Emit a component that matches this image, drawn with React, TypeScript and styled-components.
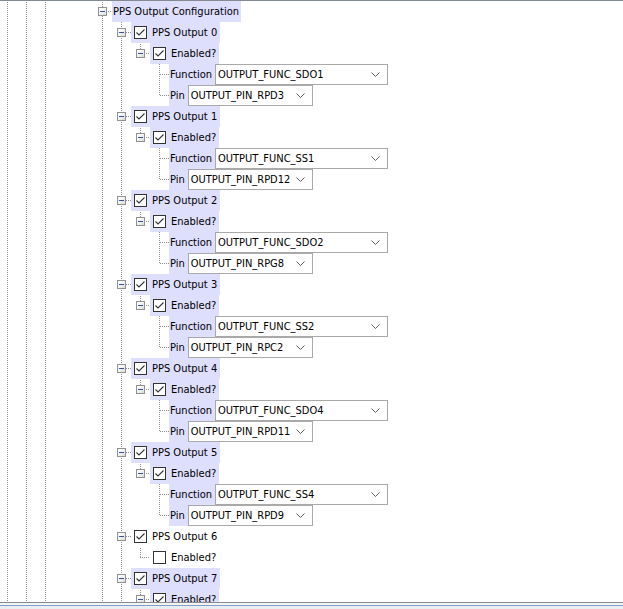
import React from 'react';
import styled, { createGlobalStyle } from 'styled-components';

const GlobalStyle = createGlobalStyle`
  html, body { margin: 0; padding: 0; background: #fff; }
  body {
    width: 623px; height: 609px; overflow: hidden;
    font-family: "DejaVu Sans Condensed", "Liberation Sans", sans-serif;
    font-size: 11px; color: #000;
  }
`;

const Window = styled.div`
  width: 623px; height: 609px;
  display: flex; flex-direction: column;
  background: #fff;
`;

const TreeArea = styled.div`
  flex: 1; min-height: 0; overflow: hidden;
  border-top: 1px solid #838a92;
`;

const Tree = styled.div`
  margin-left: -2px;
  display: flex; flex-direction: column;
`;

const Row = styled.div`
  display: flex; align-items: center;
  height: 21px; flex-shrink: 0;
`;

type GuideKind = 'none' | 'pass' | 'tee' | 'ell';

const LINE = '#8f8f8f';

const Guide = styled.div<{ $kind: GuideKind }>`
  position: relative;
  width: 19px; height: 21px; flex-shrink: 0;
  display: flex; align-items: center; justify-content: center;
  &::before {
    content: '';
    display: ${(p) => (p.$kind === 'none' ? 'none' : 'block')};
    position: absolute; left: 9px; top: 0; width: 1px;
    height: ${(p) => (p.$kind === 'ell' ? '11px' : '21px')};
    background-image: linear-gradient(to bottom, ${LINE} 50%, transparent 50%);
    background-size: 1px 2px;
    background-attachment: fixed;
  }
  &::after {
    content: '';
    display: ${(p) => (p.$kind === 'tee' || p.$kind === 'ell' ? 'block' : 'none')};
    position: absolute; left: 9px; top: 10px; height: 1px; width: 10px;
    background-image: linear-gradient(to right, ${LINE} 50%, transparent 50%);
    background-size: 2px 1px;
    background-attachment: fixed;
  }
`;

const Expander = styled.div`
  position: relative; z-index: 1;
  width: 9px; height: 9px; box-sizing: border-box;
  border: 1px solid #919191;
  background: linear-gradient(135deg, #ffffff 0%, #f2f2f2 50%, #d9d9d9 100%);
  display: flex; align-items: center; justify-content: center;
`;

const Minus = styled.span`
  width: 5px; height: 1px; background: #34539a;
`;

const Label = styled.div<{ $hl?: boolean }>`
  display: flex; align-items: center; gap: 5px;
  height: 21px; padding: 0 3px 0 3px;
  background: ${(p) => (p.$hl ? '#dedefd' : 'transparent')};
  white-space: nowrap;
`;

const RootLabel = styled(Label)`
  padding: 0 2px 0 1px;
`;

const PropLabel = styled(Label)`
  padding: 0 3px 0 1px;
`;

const Box = styled.div`
  width: 13px; height: 13px; box-sizing: border-box;
  border: 1px solid #333;
  background: #fff;
  display: flex; align-items: center; justify-content: center;
`;

const Select = styled.div<{ $w: number }>`
  width: ${(p) => p.$w}px; height: 21px; box-sizing: border-box;
  border: 1px solid #a9a9a9; background: #fff;
  display: flex; align-items: center; justify-content: space-between;
  padding: 0 7px 0 2px;
  white-space: nowrap;
`;

const Text = styled.span`
  line-height: 21px;
`;

const Check: React.FC<{ on: boolean }> = ({ on }) => (
  <Box>
    {on && (
      <svg width="11" height="11" viewBox="0 0 11 11">
        <polyline points="1.5,5.5 4,8 9.5,2.5" fill="none" stroke="#333" strokeWidth="1.1" />
      </svg>
    )}
  </Box>
);

const Chevron = () => (
  <svg width="9" height="5" viewBox="0 0 9 5">
    <polyline points="0.5,0.5 4.5,4.5 8.5,0.5" fill="none" stroke="#5a5a5a" strokeWidth="1" />
  </svg>
);

const Guides: React.FC<{ kinds: GuideKind[]; box?: boolean }> = ({ kinds, box }) => (
  <>
    {kinds.map((k, i) => (
      <Guide key={i} $kind={k}>
        {box && i === kinds.length - 1 && (
          <Expander>
            <Minus />
          </Expander>
        )}
      </Guide>
    ))}
  </>
);

type Output = {
  n: number;
  hl: boolean;
  enabled: boolean;
  func?: string;
  pin?: string;
};

const outputs: Output[] = [
  { n: 0, hl: true, enabled: true, func: 'OUTPUT_FUNC_SDO1', pin: 'OUTPUT_PIN_RPD3' },
  { n: 1, hl: true, enabled: true, func: 'OUTPUT_FUNC_SS1', pin: 'OUTPUT_PIN_RPD12' },
  { n: 2, hl: true, enabled: true, func: 'OUTPUT_FUNC_SDO2', pin: 'OUTPUT_PIN_RPG8' },
  { n: 3, hl: true, enabled: true, func: 'OUTPUT_FUNC_SS2', pin: 'OUTPUT_PIN_RPC2' },
  { n: 4, hl: true, enabled: true, func: 'OUTPUT_FUNC_SDO4', pin: 'OUTPUT_PIN_RPD11' },
  { n: 5, hl: true, enabled: true, func: 'OUTPUT_FUNC_SS4', pin: 'OUTPUT_PIN_RPD9' },
  { n: 6, hl: false, enabled: false },
  { n: 7, hl: true, enabled: true },
];

const BASE: GuideKind[] = ['pass', 'pass', 'pass', 'none', 'none'];

const StatusEdge = styled.div`
  height: 7px; flex-shrink: 0; box-sizing: border-box;
  border-top: 1px solid #8a8a8a;
  background: linear-gradient(to bottom, #f4f4f4 0 2px, #7fa0c9 2px 3px, #e9eef3 3px);
`;

export default function App() {
  return (
    <Window>
      <GlobalStyle />
      <TreeArea>
        <Tree>
          <Row>
            <Guides kinds={[...BASE, 'tee']} box />
            <RootLabel $hl>
              <Text>PPS Output Configuration</Text>
            </RootLabel>
          </Row>
          {outputs.map((o) => (
            <React.Fragment key={o.n}>
              <Row>
                <Guides kinds={[...BASE, 'pass', 'tee']} box />
                <Label $hl={o.hl}>
                  <Check on />
                  <Text>PPS Output {o.n}</Text>
                </Label>
              </Row>
              <Row>
                <Guides kinds={[...BASE, 'pass', 'pass', 'ell']} box={o.enabled} />
                <Label $hl={o.hl}>
                  <Check on={o.enabled} />
                  <Text>Enabled?</Text>
                </Label>
              </Row>
              {o.enabled && o.func && (
                <>
                  <Row>
                    <Guides kinds={[...BASE, 'pass', 'pass', 'none', 'tee']} />
                    <PropLabel $hl>
                      <Text>Function</Text>
                    </PropLabel>
                    <Select $w={173}>
                      <Text>{o.func}</Text>
                      <Chevron />
                    </Select>
                  </Row>
                  <Row>
                    <Guides kinds={[...BASE, 'pass', 'pass', 'none', 'ell']} />
                    <PropLabel $hl>
                      <Text>Pin</Text>
                    </PropLabel>
                    <Select $w={125}>
                      <Text>{o.pin}</Text>
                      <Chevron />
                    </Select>
                  </Row>
                </>
              )}
            </React.Fragment>
          ))}
        </Tree>
      </TreeArea>
      <StatusEdge />
    </Window>
  );
}
